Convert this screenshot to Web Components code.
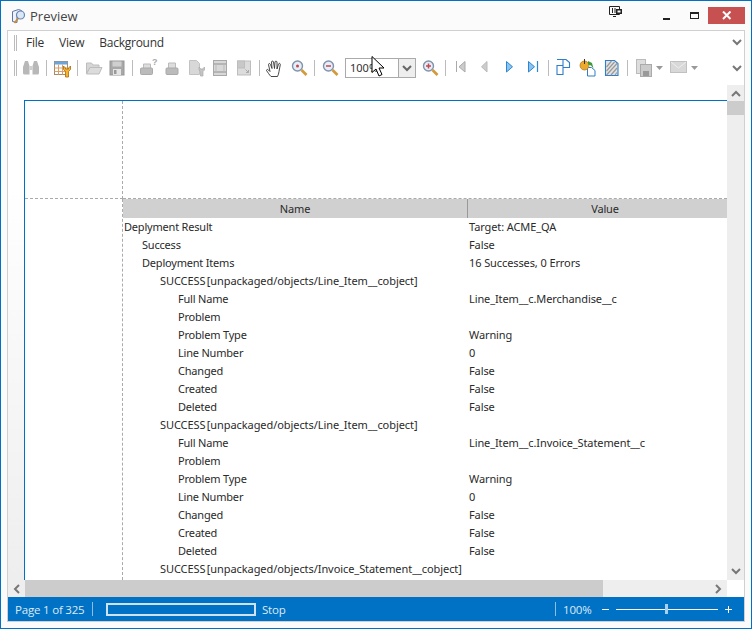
<!DOCTYPE html>
<html>
<head>
<meta charset="utf-8">
<style>
    html, body { margin: 0; padding: 0; background: #fff; }
</style>
</head>
<body>
<preview-window>
    <title-bar slot="title"></title-bar>
    <menu-bar slot="menu"></menu-bar>
    <tool-bar slot="tools"></tool-bar>
    <report-view slot="view"></report-view>
    <status-bar slot="status"></status-bar>
</preview-window>

<script>
const GRIP = '<span class="grip"></span>';

// small icons used in the toolbar, all on a 20x20 box
const ICONS = {
    binoculars: '<path d="M4 3h3l1.500 5v8.500H3.500a1.500 1.500 0 0 1-1.500-1.500V9zM16 3h-3l-1.500 5v8.500h5A1.500 1.500 0 0 0 18 15V9z" fill="#b8b8b8"/><rect x="8.500" y="8" width="3" height="4" fill="#cfcfcf"/>',
    tablewrench: '<rect x="2.500" y="3.500" width="13" height="13" fill="#fff" stroke="#a98a66"/><rect x="2.500" y="3.500" width="13" height="3" fill="#6aa5de"/><path d="M2.500 10h13M2.500 13.500h13M6.500 6.500v10M10.500 6.500v10" stroke="#dba06a"/><path d="M11.500 8v3.500l2 2V19h3v-5.500l2-2V8l-2 2v1h-3v-1z" fill="#f5b52e" stroke="#a86a10" stroke-width=".8"/>',
    folder: '<path d="M3.500 15.500V5h5l1.500 2h6v2.500H7L3.500 15.500z" fill="#d6d6d6" stroke="#bdbdbd"/><path d="M3.500 16l3.500-6.500h12l-3 6.500z" fill="#dcdcdc" stroke="#bdbdbd"/>',
    disk: '<rect x="3" y="3" width="14" height="14" fill="#a8a8a8" stroke="#969696"/><rect x="5.500" y="3.500" width="9" height="5" fill="#cfcfcf"/><rect x="6" y="11" width="8" height="6" fill="#e4e4e4"/><rect x="7" y="12" width="2.500" height="4" fill="#999"/>',
    printq: '<path d="M5.500 10V6h7v4" fill="#ddd" stroke="#bbb"/><rect x="2.500" y="10" width="12" height="6.500" rx="1" fill="#bbb" stroke="#aaa"/><text x="14" y="7" font-family="Liberation Sans, sans-serif" font-size="9" font-weight="bold" fill="#aaa">?</text>',
    printer: '<path d="M6.500 10V5h7v5" fill="#ddd" stroke="#bbb"/><rect x="4" y="10" width="12" height="6.500" rx="1" fill="#bbb" stroke="#aaa"/>',
    pagewrench: '<path d="M3.500 2.500h7l3 3v11h-10z" fill="#d8d8d8" stroke="#c2c2c2"/><path d="M13 9v3l1.500 1.500V18h2.500v-4.500l1.500-1.500V9l-1.500 1.500V11h-2.500v-.5z" fill="#c4c4c4" stroke="#aaa" stroke-width=".7"/>',
    margins: '<rect x="3.500" y="2.500" width="13" height="15" fill="#d8d8d8" stroke="#a8a8a8"/><path d="M3.500 6h13M3.500 14h13" stroke="#a8a8a8" stroke-width="1.400"/><path d="M6 6v8M14 6v8" stroke="#bbb"/>',
    scale: '<rect x="3.500" y="3" width="13" height="14" fill="#dcdcdc" stroke="#bdbdbd"/><rect x="3.500" y="3" width="7" height="7" fill="#c8c8c8" stroke="#bdbdbd"/><path d="M11.500 11.500l3 3m0-2.500v2.500H12" fill="none" stroke="#aaa"/>',
    hand: '<path d="M6 18.500c-2-2-3-4-4.500-6 0-1 1-1.500 2-.5L5 13.500 3.500 6.500c0-1 1.500-1.500 2 0L7 10.500 6.500 4c0-1.200 2-1.200 2 0L9.500 10.500l.5-6.500c0-1.200 2-1 2 0V11l1.500-5c.5-1.200 2-.6 1.800.6L14 13.500c0 2-1 3.500-1.500 5z" fill="#fff" stroke="#333" stroke-width=".9"/>',
    zoomdot: '<circle cx="8.500" cy="8" r="5" fill="#e6eef7" stroke="#7f93ad" stroke-width="1.400"/><circle cx="8.500" cy="8" r="1.500" fill="#c8474f"/><path d="M12.500 12l5 5" stroke="#d49a3a" stroke-width="2.600"/>',
    zoomout: '<circle cx="8.500" cy="8" r="5" fill="#e6eef7" stroke="#7f93ad" stroke-width="1.400"/><path d="M6 8h5" stroke="#c8474f" stroke-width="1.500"/><path d="M12.500 12l5 5" stroke="#d49a3a" stroke-width="2.600"/>',
    zoomin: '<circle cx="8.500" cy="8" r="5" fill="#e6eef7" stroke="#7f93ad" stroke-width="1.400"/><path d="M6 8h5M8.500 5.500v5" stroke="#c8474f" stroke-width="1.500"/><path d="M12.500 12l5 5" stroke="#d49a3a" stroke-width="2.600"/>',
    first: '<path d="M5.500 3v11" stroke="#aaa"/><path d="M14 3.500v10.500L8 8.800z" fill="#ccc" stroke="#aaa"/>',
    prev: '<path d="M12 3.500v10.500L6.500 8.800z" fill="#ccc" stroke="#bbb"/>',
    next: '<path d="M7.500 3.500v10.500L13.500 8.800z" fill="#8cc4f0" stroke="#2e86d2"/>',
    last: '<path d="M5.500 3.500v10.500l6-5.200z" fill="#8cc4f0" stroke="#2e86d2"/><path d="M14.500 3v11" stroke="#2e86d2" stroke-width="1.200"/>',
    pages: '<path d="M3 7.500h6v9H3zM3 1.500h6v6M9 1.500h3l3.500 3v5H9" fill="#fff" stroke="#2e7fc8" stroke-width="1.100"/>',
    pagefill: '<path d="M9.500 9.500h4l3.500 3v5.500H9.500z" fill="#fff" stroke="#2e7fc8"/><circle cx="6.500" cy="7.500" r="4.500" fill="#eda92c" stroke="#a87518" stroke-width=".7"/><path d="M6.500 1v5" stroke="#333"/><path d="M10 3l4 2 1.500 5.500-2.500-3-3-1z" fill="#3d9a3a"/>',
    watermark: '<path d="M3.500 2.500h9l3.500 3v12H3.500z" fill="#e2e2e2" stroke="#2e7fc8" stroke-width="1.100"/><path d="M4.500 9l5-6M4.500 13l8-9M4.500 17l11-12M9 17l6-7M13 17l2-2.500" stroke="#999" stroke-width="1.200"/>',
    copies: '<rect x="3.500" y="1.500" width="9" height="14" fill="#ddd" stroke="#bbb"/><rect x="7.500" y="6.500" width="11" height="12" fill="#cbcbcb" stroke="#aaa"/><rect x="10" y="13" width="6" height="5" fill="#999"/>',
    mail: '<rect x="2.500" y="3.500" width="16" height="11" fill="#d8d8d8" stroke="#c0c0c0"/><path d="M3 4l7.500 6L18 4" fill="none" stroke="#eee"/>'
};

class TitleBar extends HTMLElement {
    constructor() {
        super();
        this.attachShadow({ mode: 'open' });
        this.shadowRoot.innerHTML = `
            <style>
                :host { display: flex; align-items: center; height: 29px; position: relative; color: #444; font: 13px "Open Sans", sans-serif; }
                .logo { margin-left: 10px; margin-right: 3px; width: 16px; height: 16px; flex: none; }
                .buttons { margin-left: auto; display: flex; align-self: flex-start; margin-top: 6px; margin-right: 6px; }
                .btn { width: 28px; height: 17px; display: flex; align-items: center; justify-content: center; }
                .close { width: 37px; background: #c75050; }
                .pin { position: absolute; left: 608px; top: 5px; }
            </style>
            <svg class="logo" viewBox="0 0 16 16">
                <path d="M1.500 3.500l6-2 3 1v3H6v9l-4.500-1z" fill="#eef2f8" stroke="#5e76a8"/>
                <circle cx="9.500" cy="7" r="4" fill="#d9e8f7" stroke="#6c87b0" stroke-width="1.200"/>
                <path d="M7 10.500l-3.500 4.500" stroke="#c98a35" stroke-width="1.800"/>
            </svg>
            <span>Preview</span>
            <svg class="pin" width="13" height="12" viewBox="0 0 13 12">
                <path d="M.5.500h10v8H.5z" fill="none" stroke="#222"/>
                <path d="M3.500 2v5M6 2v5M4 10.500h3" stroke="#222"/>
                <rect x="7" y="3" width="6" height="5" fill="#222"/><rect x="8.500" y="4.500" width="3" height="2" fill="#fff"/>
            </svg>
            <div class="buttons">
                <div class="btn"><svg width="7" height="8"><rect y="6" width="7" height="2" fill="#222" /></svg></div>
                <div class="btn"><svg width="9" height="7"><rect x=".5" y=".5" width="8" height="6" fill="none" stroke="#222"/><rect width="9" height="2" fill="#222"/></svg></div>
                <div class="btn close"><svg width="10" height="9"><path d="M1 .5l7.500 7.500M8.500 .5L1 8" stroke="#fff" stroke-width="2"/></svg></div>
            </div>
        `;
    }
}

class MenuBar extends HTMLElement {
    constructor() {
        super();
        this.attachShadow({ mode: 'open' });
        this.shadowRoot.innerHTML = `
            <style>
                :host { display: flex; align-items: center; height: 23px; color: #333; font: 12px "Open Sans", sans-serif; letter-spacing: -.25px; }
                .grip { width: 1px; height: 16px; border-left: 1px solid #bbb; border-right: 1px solid #bbb; margin: 0 9px 0 6px; }
                span.item { margin-right: 15px; }
                .chev { margin-left: auto; margin-right: 2px; }
            </style>
            ${GRIP}
            <span class="item">File</span>
            <span class="item">View</span>
            <span class="item">Background</span>
            <svg class="chev" width="10" height="7"><path d="M1 1l4 4 4-4" fill="none" stroke="#777" stroke-width="2"/></svg>
        `;
    }
}

class ToolBar extends HTMLElement {
    constructor() {
        super();
        this.attachShadow({ mode: 'open' });
        const icon = (name) => `<svg class="ic" width="24" height="20" viewBox="0 0 24 20"><g transform="translate(2 0)">${ICONS[name]}</g></svg>`;
        const sep = '<i class="sep"></i>';
        this.shadowRoot.innerHTML = `
            <style>
                :host { display: flex; align-items: center; height: 28px; padding-bottom: 3px; font: 11px "Noto Sans", sans-serif; color: #333; }
                .grip { width: 1px; height: 16px; border-left: 1px solid #bbb; border-right: 1px solid #bbb; margin: 0 2px 0 6px; flex: none; }
                .ic { display: block; flex: none; }
                .sep { width: 1px; height: 16px; background: #bbb; margin: 0 3px; flex: none; }
                .combo { width: 69px; height: 18px; border: 1px solid #aaa; display: flex; margin: 0 2px 0 3px; background: #fff; flex: none; position: relative; }
                .combo b { font-weight: normal; flex: 1; padding-left: 4px; line-height: 18px; overflow: hidden; white-space: nowrap; }
                .combo u { width: 16px; background: #eee; border-left: 1px solid #aaa; display: flex; align-items: center; justify-content: center; flex: none; }
                .cursor { position: absolute; left: 25px; top: -3px; }
                .drop { margin: 0 3px 0 1px; flex: none; }
                .chev { margin-left: auto; margin-right: 2px; }
            </style>
            ${GRIP}
            ${icon('binoculars')}${sep}
            ${icon('tablewrench')}${sep}
            ${icon('folder')}${icon('disk')}${sep}
            ${icon('printq')}${icon('printer')}${icon('pagewrench')}${icon('margins')}${icon('scale')}${sep}
            ${icon('hand')}${icon('zoomdot')}${sep}
            ${icon('zoomout')}
            <div class="combo"><b>100%</b><u><svg width="10" height="7"><path d="M1 1l4 4 4-4" fill="none" stroke="#666" stroke-width="2"/></svg></u>
                <svg class="cursor" width="14" height="21" viewBox="0 0 14 21"><path d="M1 .5v16l4-3.500 3 7 3-1.500-3-6.500h5z" fill="#fff" stroke="#000"/></svg>
            </div>
            ${icon('zoomin')}${sep}
            ${icon('first')}${icon('prev')}${icon('next')}${icon('last')}${sep}
            ${icon('pages')}${icon('pagefill')}${icon('watermark')}${sep}
            ${icon('copies')}<svg class="drop" width="7" height="4"><path d="M0 0h7L3.500 4z" fill="#999"/></svg>
            ${icon('mail')}<svg class="drop" width="7" height="4"><path d="M0 0h7L3.500 4z" fill="#999"/></svg>
            <svg class="chev" width="10" height="7"><path d="M1 1l4 4 4-4" fill="none" stroke="#777" stroke-width="2"/></svg>
        `;
    }
}

class ReportRow extends HTMLElement {
    constructor() {
        super();
        this.attachShadow({ mode: 'open' });
        this.shadowRoot.innerHTML = `
            <style>
                :host { display: grid; grid-template-columns: 344px 1fr; height: 18px; line-height: 18px; white-space: nowrap; }
                .name { padding-left: calc(var(--lvl, 0) * 18px + 1px); letter-spacing: var(--ls, -.2px); }
                .value { padding-left: 2px; letter-spacing: -.1px; }
            </style>
            <div class="name"><slot name="n"></slot></div>
            <div class="value"><slot name="v"></slot></div>
        `;
    }
}
customElements.define('report-row', ReportRow);

class ReportView extends HTMLElement {
    constructor() {
        super();
        this.attachShadow({ mode: 'open' });
        const rows = [
            [0, 'Deplyment Result', 'Target: ACME_QA'],
            [1, 'Success', 'False'],
            [1, 'Deployment Items', '16 Successes, 0 Errors'],
            [2, 'SUCCESS [unpackaged/objects/Line_Item__cobject]', ''],
            [3, 'Full Name', 'Line_Item__c.Merchandise__c'],
            [3, 'Problem', ''],
            [3, 'Problem Type', 'Warning'],
            [3, 'Line Number', '0'],
            [3, 'Changed', 'False'],
            [3, 'Created', 'False'],
            [3, 'Deleted', 'False'],
            [2, 'SUCCESS [unpackaged/objects/Line_Item__cobject]', ''],
            [3, 'Full Name', 'Line_Item__c.Invoice_Statement__c'],
            [3, 'Problem', ''],
            [3, 'Problem Type', 'Warning'],
            [3, 'Line Number', '0'],
            [3, 'Changed', 'False'],
            [3, 'Created', 'False'],
            [3, 'Deleted', 'False'],
            [2, 'SUCCESS [unpackaged/objects/Invoice_Statement__cobject]', '']
        ];
        this.shadowRoot.innerHTML = `
            <style>
                :host { display: grid; grid-template-columns: minmax(0, 1fr) 17px; grid-template-rows: 495px 17px; font: 11px "Noto Sans", sans-serif; letter-spacing: -.15px; color: #2a2a2a; }
                .area { padding: 15px 0 0 16px; overflow: hidden; background: linear-gradient(#fff, #fff 20%, #eee); }
                .page { display: grid; grid-template-columns: 98px minmax(0, 1fr); grid-template-rows: 98px 1fr; height: 100%; box-sizing: border-box; background: #fff; border-left: 1px solid #0072c6; border-top: 1px solid #0072c6; overflow: hidden; }
                .a { border-right: 1px dashed #aaa; border-bottom: 1px dashed #aaa; }
                .b { border-bottom: 1px dashed #aaa; }
                .c { border-right: 1px dashed #aaa; }
                .head { display: grid; grid-template-columns: 344px 275px; height: 19px; line-height: 19px; background: #d0d0d0; text-align: center; }
                .head div + div { border-left: 1px solid #999; }
                .scroll { background: #eee; display: flex; flex-direction: column; justify-content: space-between; }
                .scroll.h { flex-direction: row; align-items: stretch; }
                .arrow { flex: none; width: 17px; height: 16px; display: flex; align-items: center; justify-content: center; }
                .thumb { background: #ccc; }
                .v { flex: 1; display: flex; flex-direction: column; }
                .hh { flex: 1; display: flex; }
            </style>
            <div class="area">
                <div class="page">
                    <div class="a"></div><div class="b"></div><div class="c"></div>
                    <div>
                        <div class="head"><div>Name</div><div>Value</div></div>
                        ${rows.map(r => `<report-row style="--lvl:${r[0]}${r[0] === 2 ? ';--ls:-.07px;word-spacing:-1.500px' : ''}"><span slot="n">${r[1]}</span><span slot="v">${r[2]}</span></report-row>`).join('')}
                    </div>
                </div>
            </div>
            <div class="scroll">
                <div class="arrow"><svg width="10" height="7"><path d="M1 6l4-4 4 4" fill="none" stroke="#777" stroke-width="2"/></svg></div>
                <div class="v"><div class="thumb" style="height:14px"></div></div>
                <div class="arrow" style="height:17px"><svg width="10" height="7"><path d="M1 1l4 4 4-4" fill="none" stroke="#777" stroke-width="2"/></svg></div>
            </div>
            <div class="scroll h">
                <div class="arrow" style="height:17px"><svg width="7" height="10"><path d="M6 1L2 5l4 4" fill="none" stroke="#777" stroke-width="2"/></svg></div>
                <div class="hh"><div class="thumb" style="width:578px"></div></div>
                <div class="arrow" style="height:17px"><svg width="7" height="10"><path d="M1 1l4 4-4 4" fill="none" stroke="#777" stroke-width="2"/></svg></div>
            </div>
            <div></div>
        `;
    }
}

class StatusBar extends HTMLElement {
    constructor() {
        super();
        this.attachShadow({ mode: 'open' });
        this.shadowRoot.innerHTML = `
            <style>
                :host { display: flex; align-items: center; height: 24px; background: #0072c6; color: #dfeaf5; font: 11.5px "Open Sans", sans-serif; letter-spacing: -.2px; }
                .page { margin-left: 7px; width: 77px; flex: none; white-space: nowrap; }
                .sep { width: 1px; height: 14px; background: #8fbde3; flex: none; }
                .prog { width: 146px; height: 9px; border: 2px solid #cfe2f3; margin: 0 6px 0 13px; flex: none; }
                .zoom { margin-left: auto; display: flex; align-items: center; margin-right: 12px; }
                .zoom .sep { margin-right: 7px; }
                .pct { width: 39px; }
                .track { width: 102px; height: 1px; background: #fff; margin: 0 7px; position: relative; }
                .track i { position: absolute; left: 49px; top: -5px; width: 3px; height: 10px; background: #a8d0f0; }
                .m { width: 7px; height: 1px; background: #fff; }
                .p { width: 7px; height: 7px; background: linear-gradient(#fff,#fff) center/7px 1px no-repeat, linear-gradient(#fff,#fff) center/1px 7px no-repeat; }
            </style>
            <span class="page">Page 1 of 325</span>
            <i class="sep"></i>
            <div class="prog"></div>
            <span>Stop</span>
            <div class="zoom">
                <i class="sep"></i>
                <span class="pct">100%</span>
                <i class="m"></i><div class="track"><i></i></div><i class="p"></i>
            </div>
        `;
    }
}

class PreviewWindow extends HTMLElement {
    constructor() {
        super();
        this.attachShadow({ mode: 'open' });
        this.shadowRoot.innerHTML = `
            <style>
                :host { display: block; width: 752px; height: 629px; box-sizing: border-box; border: 1px solid #0072c6; background: #fbfbfb; }
                .inner { margin: 0 6px 6px 6px; border: 1px solid #d0d0d0; background: #fff; }
            </style>
            <slot name="title"></slot>
            <div class="inner">
                <slot name="menu"></slot>
                <slot name="tools"></slot>
                <slot name="view"></slot>
                <slot name="status"></slot>
            </div>
        `;
    }
}

customElements.define('title-bar', TitleBar);
customElements.define('menu-bar', MenuBar);
customElements.define('tool-bar', ToolBar);
customElements.define('report-view', ReportView);
customElements.define('status-bar', StatusBar);
customElements.define('preview-window', PreviewWindow);
</script>
</body>
</html>
